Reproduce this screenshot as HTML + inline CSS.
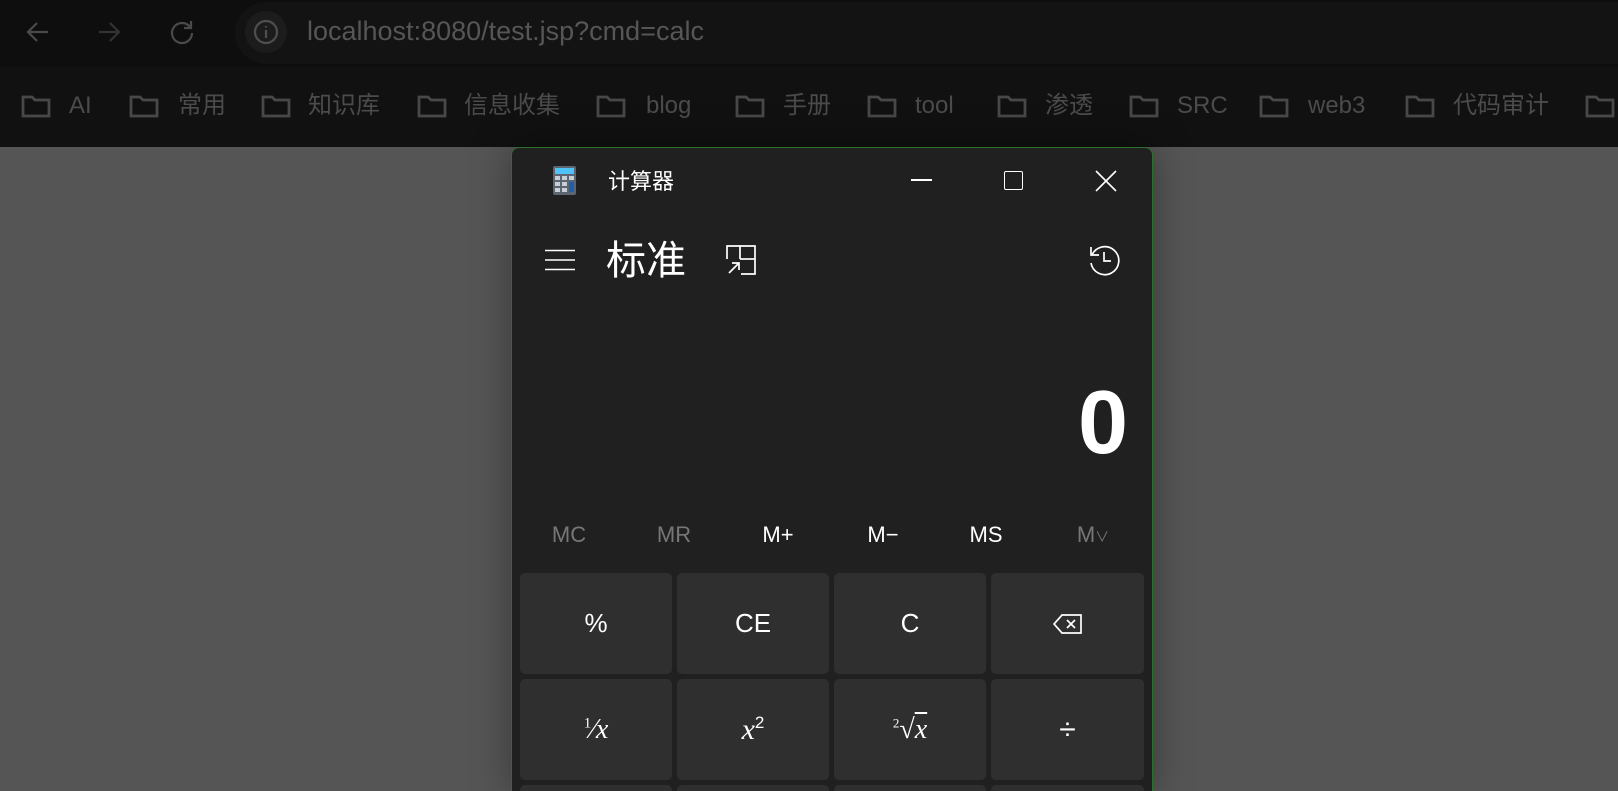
<!DOCTYPE html>
<html style="overflow:hidden;width:1618px;height:791px"><head><meta charset="utf-8"><style>
*{margin:0;padding:0;box-sizing:border-box}
html,body{width:1618px;height:791px;overflow:hidden}
body{background:#555;font-family:"Liberation Sans","Noto Sans CJK SC",sans-serif}
#wrap{position:relative;width:1618px;height:791px;overflow:hidden;background:#555}
.a{position:absolute}
#top{left:0;top:0;width:1618px;height:67px;background:#0e0e0e}
#bm{left:0;top:67px;width:1618px;height:80px;background:#111}
.bt{position:absolute;top:92px;height:28px;font-size:24px;line-height:28px;color:#4b4b4b;white-space:nowrap}
.fd{position:absolute;top:93px}
#win{left:511px;top:147px;width:642px;height:644px;background:#202020;border:1.5px solid #2c6e2c;border-bottom:none;border-radius:8px 8px 0 0;box-shadow:0 0 40px rgba(0,0,0,.35)}
.btn{position:absolute;background:#2f2f2f;border-radius:5px;color:#fff;display:flex;align-items:center;justify-content:center;font-size:26px}
.m{position:absolute;top:522px;font-size:22px;color:#fff;transform:translateX(-50%)}
.ser{font-family:"Liberation Serif",serif;font-style:italic}
</style></head><body><div id="wrap">
<div class="a" id="top"></div>
<div class="a" id="bm"></div>
<svg class="a" style="left:24px;top:19px" width="28" height="26" viewBox="0 0 28 26" fill="none" stroke="#4a4a4a" stroke-width="2.2"><path d="M24 13H4M13 4L4 13l9 9"/></svg>
<svg class="a" style="left:95px;top:19px" width="28" height="26" viewBox="0 0 28 26" fill="none" stroke="#333" stroke-width="2.2"><path d="M4 13h20M15 4l9 9-9 9"/></svg>
<svg class="a" style="left:168px;top:18px" width="28" height="28" viewBox="0 0 28 28" fill="none" stroke="#4a4a4a" stroke-width="2.2"><path d="M22 9A10 10 0 1 0 24 15"/><path d="M23 3v7h-7"/></svg>
<div class="a" style="left:235px;top:2px;width:1383px;height:62px;border-radius:31px 0 0 31px;background:#131313"></div>
<div class="a" style="left:245px;top:11px;width:42px;height:42px;border-radius:50%;background:#1c1c1c"></div>
<svg class="a" style="left:253px;top:19px" width="26" height="26" viewBox="0 0 26 26" fill="none" stroke="#4f4f4f" stroke-width="2.2"><circle cx="13" cy="13" r="11"/><path d="M13 11v8M13 7v1.5"/></svg>
<div class="a" style="left:307px;top:14px;font-size:27px;color:#565656;line-height:34px">localhost:8080/test.jsp?cmd=calc</div>
<svg width="0" height="0" style="position:absolute"><defs><symbol id="f" viewBox="0 0 30 26"><path d="M2 4h9l3 3h14v16H2z" fill="none" stroke="#484848" stroke-width="2.8"/></symbol></defs></svg>
<svg class="fd" style="left:21px" width="30" height="26"><use href="#f"/></svg><div class="bt" style="left:69px">AI</div>
<svg class="fd" style="left:129px" width="30" height="26"><use href="#f"/></svg><div class="bt" style="left:178px">常用</div>
<svg class="fd" style="left:261px" width="30" height="26"><use href="#f"/></svg><div class="bt" style="left:308px">知识库</div>
<svg class="fd" style="left:417px" width="30" height="26"><use href="#f"/></svg><div class="bt" style="left:464px">信息收集</div>
<svg class="fd" style="left:596px" width="30" height="26"><use href="#f"/></svg><div class="bt" style="left:646px">blog</div>
<svg class="fd" style="left:735px" width="30" height="26"><use href="#f"/></svg><div class="bt" style="left:783px">手册</div>
<svg class="fd" style="left:867px" width="30" height="26"><use href="#f"/></svg><div class="bt" style="left:915px">tool</div>
<svg class="fd" style="left:997px" width="30" height="26"><use href="#f"/></svg><div class="bt" style="left:1045px">渗透</div>
<svg class="fd" style="left:1129px" width="30" height="26"><use href="#f"/></svg><div class="bt" style="left:1177px">SRC</div>
<svg class="fd" style="left:1259px" width="30" height="26"><use href="#f"/></svg><div class="bt" style="left:1308px">web3</div>
<svg class="fd" style="left:1405px" width="30" height="26"><use href="#f"/></svg><div class="bt" style="left:1453px">代码审计</div>
<svg class="fd" style="left:1585px" width="30" height="26"><use href="#f"/></svg>
<div class="a" id="win"></div>
<svg class="a" style="left:553px;top:166px" width="23" height="29" viewBox="0 0 23 29"><rect x="0" y="0" width="23" height="29" rx="2" fill="#5d6670"/><rect x="2" y="2" width="19" height="6" fill="#4fc3f7"/><g fill="#c9cfd6"><rect x="2" y="10" width="5" height="4"/><rect x="9" y="10" width="5" height="4"/><rect x="16" y="10" width="5" height="4"/><rect x="2" y="16" width="5" height="4"/><rect x="9" y="16" width="5" height="4"/><rect x="2" y="22" width="5" height="4"/><rect x="9" y="22" width="5" height="4"/></g><rect x="16" y="16" width="5" height="10" fill="#1e5fa8"/></svg>
<div class="a" style="left:608px;top:167px;font-size:22px;color:#fff;line-height:30px">计算器</div>
<div class="a" style="left:911px;top:179px;width:21px;height:1.5px;background:#fff"></div>
<div class="a" style="left:1004px;top:171px;width:19px;height:19px;border:1.5px solid #fff;border-radius:2px"></div>
<svg class="a" style="left:1095px;top:170px" width="22" height="22" fill="none" stroke="#fff" stroke-width="1.6"><path d="M1 1l20 20M21 1L1 21"/></svg>
<svg class="a" style="left:545px;top:249px" width="30" height="22" fill="none" stroke="#fff" stroke-width="1.6"><path d="M0 1.5h30M0 11h30M0 20.5h30"/></svg>
<div class="a" style="left:606px;top:236px;font-size:40px;color:#fff;line-height:50px">标准</div>
<svg class="a" style="left:726px;top:245px" width="31" height="30" fill="none" stroke="#fff" stroke-width="1.7"><path d="M1 14V1h13v13"/><path d="M14 1h15v28H15"/><path d="M14 14h15"/><path d="M3 28l10-10M6 18h7v7"/></svg>
<svg class="a" style="left:1087px;top:243px" width="34" height="34" viewBox="0 0 34 34" fill="none" stroke="#fff" stroke-width="1.7"><path d="M5 12A14 14 0 1 1 4 20"/><path d="M4 4v8h8"/><path d="M17 9v9h7"/></svg>
<div class="a" style="left:1060px;top:378px;font-size:90px;font-weight:bold;color:#fff;line-height:90px;width:68px;text-align:right">0</div>
<div class="m" style="left:569px;color:#777">MC</div>
<div class="m" style="left:674px;color:#777">MR</div>
<div class="m" style="left:778px">M+</div>
<div class="m" style="left:883px">M−</div>
<div class="m" style="left:986px">MS</div>
<div class="m" style="left:1093px;color:#777">M<span style="font-size:14px">∨</span></div>
<div class="btn" style="left:520px;top:573px;width:152px;height:101px">%</div>
<div class="btn" style="left:677px;top:573px;width:152px;height:101px">CE</div>
<div class="btn" style="left:834px;top:573px;width:152px;height:101px">C</div>
<div class="btn" style="left:991px;top:573px;width:153px;height:101px"><svg width="30" height="22" fill="none" stroke="#fff" stroke-width="1.7"><path d="M9 2h19v18H9L1 11z"/><path d="M14 7l8 8M22 7l-8 8"/></svg></div>
<div class="btn ser" style="left:520px;top:679px;width:152px;height:101px"><span style="font-size:28px"><sup style="font-size:15px;font-style:normal">1</sup>⁄x</span></div>
<div class="btn ser" style="left:677px;top:679px;width:152px;height:101px"><span style="font-size:30px">x<sup style="font-size:17px;font-style:normal;font-family:'Liberation Sans'">2</sup></span></div>
<div class="btn ser" style="left:834px;top:679px;width:152px;height:101px"><span style="font-size:28px"><sup style="font-size:13px;font-style:normal">2</sup>√<span style="text-decoration:overline">x</span></span></div>
<div class="btn" style="left:991px;top:679px;width:153px;height:101px;font-size:30px">÷</div>
<div class="a" style="left:520px;top:785px;width:152px;height:6px;background:#2f2f2f;border-radius:5px 5px 0 0"></div>
<div class="a" style="left:677px;top:785px;width:152px;height:6px;background:#2f2f2f;border-radius:5px 5px 0 0"></div>
<div class="a" style="left:834px;top:785px;width:152px;height:6px;background:#2f2f2f;border-radius:5px 5px 0 0"></div>
<div class="a" style="left:991px;top:785px;width:153px;height:6px;background:#2f2f2f;border-radius:5px 5px 0 0"></div>
</div></body></html>
